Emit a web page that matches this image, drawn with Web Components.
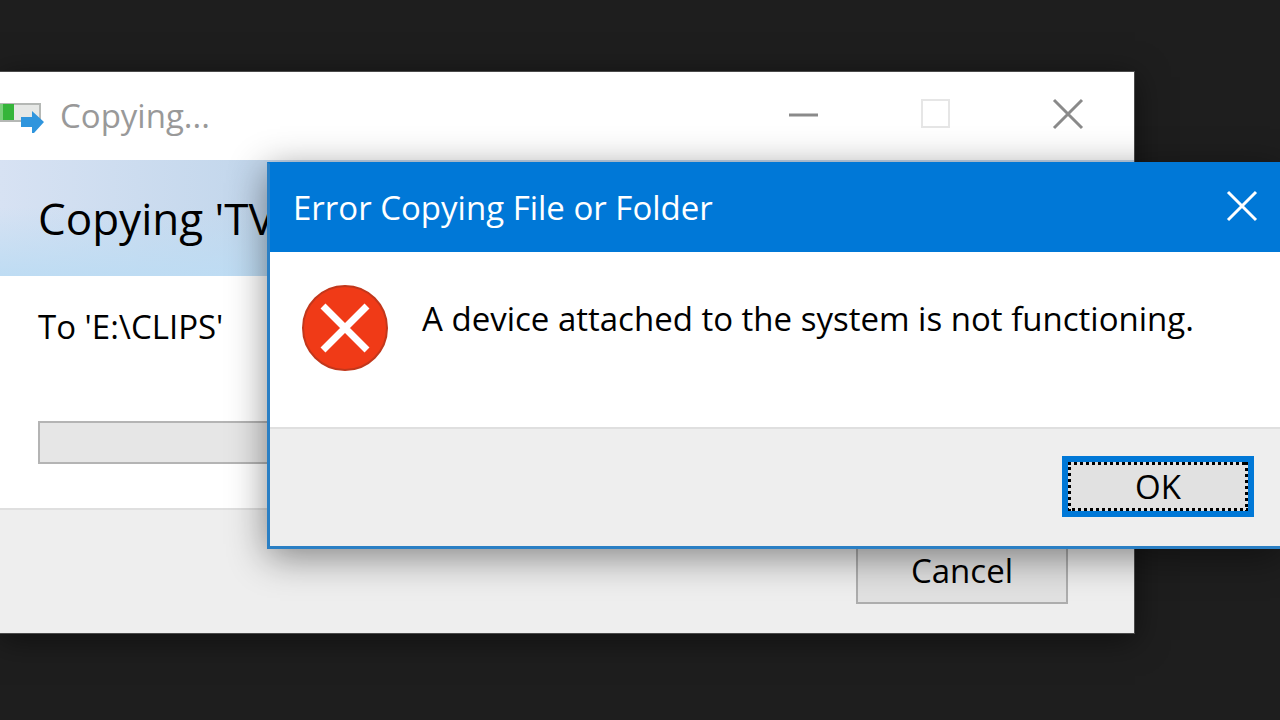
<!DOCTYPE html>
<html lang="en">
<head>
<meta charset="utf-8">
<title>Error Copying File or Folder</title>
<style>
  html, body { margin: 0; height: 100%; }
  body { font-family: "Open Sans", "Noto Sans", sans-serif; background: #1e1e1e; color: #000; overflow: hidden; }
</style>
</head>
<body>
<desk-top>
  <copy-window slot="back"></copy-window>
  <error-dialog slot="front"></error-dialog>
</desk-top>

<script>
const define = (name, html) => customElements.define(name, class extends HTMLElement {
  constructor() {
    super();
    this.attachShadow({ mode: "open" }).innerHTML = html;
  }
});

define("desk-top", `
  <style>
    :host { display: block; position: relative; height: 100%; min-height: 660px; overflow: hidden; background: #1e1e1e; }
    slot[name=back]::slotted(*) { position: absolute; left: 0; right: 145px; top: 71px; }
    slot[name=front]::slotted(*) { position: absolute; left: 267px; right: -3px; top: 162px; }
  </style>
  <slot name="back"></slot><slot name="front"></slot>`);

define("title-bar", `
  <style>
    :host { display: flex; align-items: center; height: 88px; font-size: 33px; line-height: 44px; box-sizing: border-box; }
    .text { flex: 1; white-space: nowrap; }
    .tools { display: flex; }
  </style>
  <slot name="icon"></slot>
  <span class="text"><slot></slot></span>
  <span class="tools"><slot name="tools"></slot></span>`);

const glyphs = {
  minimize: '<path d="M1 17H30" stroke-width="3"/>',
  maximize: '<path d="M2 2H29V29H2Z" stroke-width="2"/>',
  close: '<path d="M2 2L30 30M30 2L2 30" stroke-width="3"/>'
};
customElements.define("caption-button", class extends HTMLElement {
  constructor() {
    super();
    const kind = this.getAttribute("kind");
    this.attachShadow({ mode: "open" }).innerHTML = `
      <style>
        :host { display: block; }
        button { display: flex; align-items: center; justify-content: center; box-sizing: border-box; width: 132px; height: 88px; padding: 0 0 4px; border: 0; background: none; color: inherit; }
        svg { display: block; width: 32px; height: 32px; fill: none; stroke: currentColor; }
      </style>
      <button type="button" aria-label="${kind}"><svg viewBox="0 0 32 32">${glyphs[kind]}</svg></button>`;
  }
});

customElements.define("push-button", class extends HTMLElement {
  constructor() {
    super();
    this.attachShadow({ mode: "open" }).innerHTML = `
      <style>
        :host { display: block; width: 212px; }
        button { display: flex; align-items: center; justify-content: center; box-sizing: border-box; width: 100%; height: 66px; padding: 0;
          border: 2px solid #adadad; background: #e1e1e1; color: #000; font: inherit; font-size: 33px; line-height: 44px; position: relative; }
        .ring { display: none; }
        :host([primary]) { width: 192px; }
        :host([primary]) button { border: 6px solid #0078d7; height: 61px; }
        :host([primary]) .ring { display: block; position: absolute; inset: 0; width: 100%; height: 100%; }
      </style>
      <button type="button"><svg class="ring" aria-hidden="true"><rect width="100%" height="100%" fill="none" stroke="#000" stroke-width="6" stroke-dasharray="3 3"/></svg><slot></slot></button>`;
  }
});

define("copy-icon", `
  <style>:host { display: block; width: 46px; height: 34px; margin-right: 14px; } svg { display: block; }</style>
  <svg width="46" height="34" viewBox="0 0 46 34" aria-hidden="true">
    <rect x="-2" y="5" width="42" height="17" fill="#e6e8e6" stroke="#b5b8b5" stroke-width="2"/>
    <rect x="0" y="5" width="14" height="16" fill="#35b53a"/>
    <rect x="0" y="5" width="3" height="16" fill="#7bcf7c"/>
    <path d="M21 18H32V12L44 23L34 34H32V28H21Z" fill="#2f95dd"/>
  </svg>`);

define("progress-track", `
  <style>
    :host { display: block; }
    div { box-sizing: border-box; height: 43px; border: 2px solid #b4b4b4; background: #e6e6e6; }
  </style>
  <div role="progressbar" aria-label="Copy progress" aria-valuemin="0" aria-valuemax="100"></div>`);

define("copy-window", `
  <style>
    :host { display: block; box-sizing: border-box; border: 1px solid #4a4a4a; border-left: 0; background: #fff; box-shadow: 0 6px 30px rgba(0,0,0,.5); }
    title-bar { color: #999; }
    caption-button { color: #8a8a8a; }
    caption-button[kind=maximize] { color: #e6e6e6; }
    header { height: 116px; padding-left: 38px; display: flex; align-items: center; background: linear-gradient(180deg, rgba(190,220,243,0) 40%, #bedcf3), linear-gradient(90deg, #d7e2f3, #c3d7ec 22%, #c3d7ec); }
    h1 { margin: 0; font-size: 44px; line-height: 60px; font-weight: 400; white-space: nowrap; }
    section { padding: 29px 66px 44px 38px; }
    p { margin: 0 0 72px; font-size: 33px; line-height: 44px; }
    footer { display: flex; justify-content: flex-end; padding: 28px 66px 29px; border-top: 2px solid #dfdfdf; background: #eee; }
  </style>
  <title-bar>
    <copy-icon slot="icon"></copy-icon>Copying...
    <caption-button slot="tools" kind="minimize"></caption-button>
    <caption-button slot="tools" kind="maximize"></caption-button>
    <caption-button slot="tools" kind="close"></caption-button>
  </title-bar>
  <header><h1>Copying 'TV</h1></header>
  <section><p>To 'E:\\CLIPS'</p><progress-track></progress-track></section>
  <footer><push-button>Cancel</push-button></footer>`);

define("error-icon", `
  <style>:host { display: block; } svg { display: block; }</style>
  <svg width="88" height="88" viewBox="0 0 88 88" role="img" aria-label="Error">
    <circle cx="44" cy="44" r="42" fill="#f03a17" stroke="#c2371b" stroke-width="2"/>
    <path d="M22 22L66 66M66 22L22 66" stroke="#fff" stroke-width="7"/>
  </svg>`);

define("error-dialog", `
  <style>
    :host { display: block; box-sizing: border-box; border: 3px solid #2a7fc4; border-top: 2px solid #0078d7; background: #fff; box-shadow: 0 8px 36px rgba(0,0,0,.45); }
    title-bar { background: #0078d7; color: #fff; padding-left: 23px; }
    caption-button { margin-right: -28px; }
    main { display: flex; align-items: flex-start; gap: 33px; padding: 32px 31px 55px; }
    p { margin: 0; padding-top: 13px; font-size: 33px; line-height: 44px; white-space: nowrap; }
    footer { display: flex; justify-content: flex-end; padding: 27px 26px 29px; border-top: 2px solid #dfdfdf; background: #eee; }
  </style>
  <title-bar>Error Copying File or Folder<caption-button slot="tools" kind="close"></caption-button></title-bar>
  <main><error-icon></error-icon><p>A device attached to the system is not functioning.</p></main>
  <footer><push-button primary>OK</push-button></footer>`);
</script>
</body>
</html>
